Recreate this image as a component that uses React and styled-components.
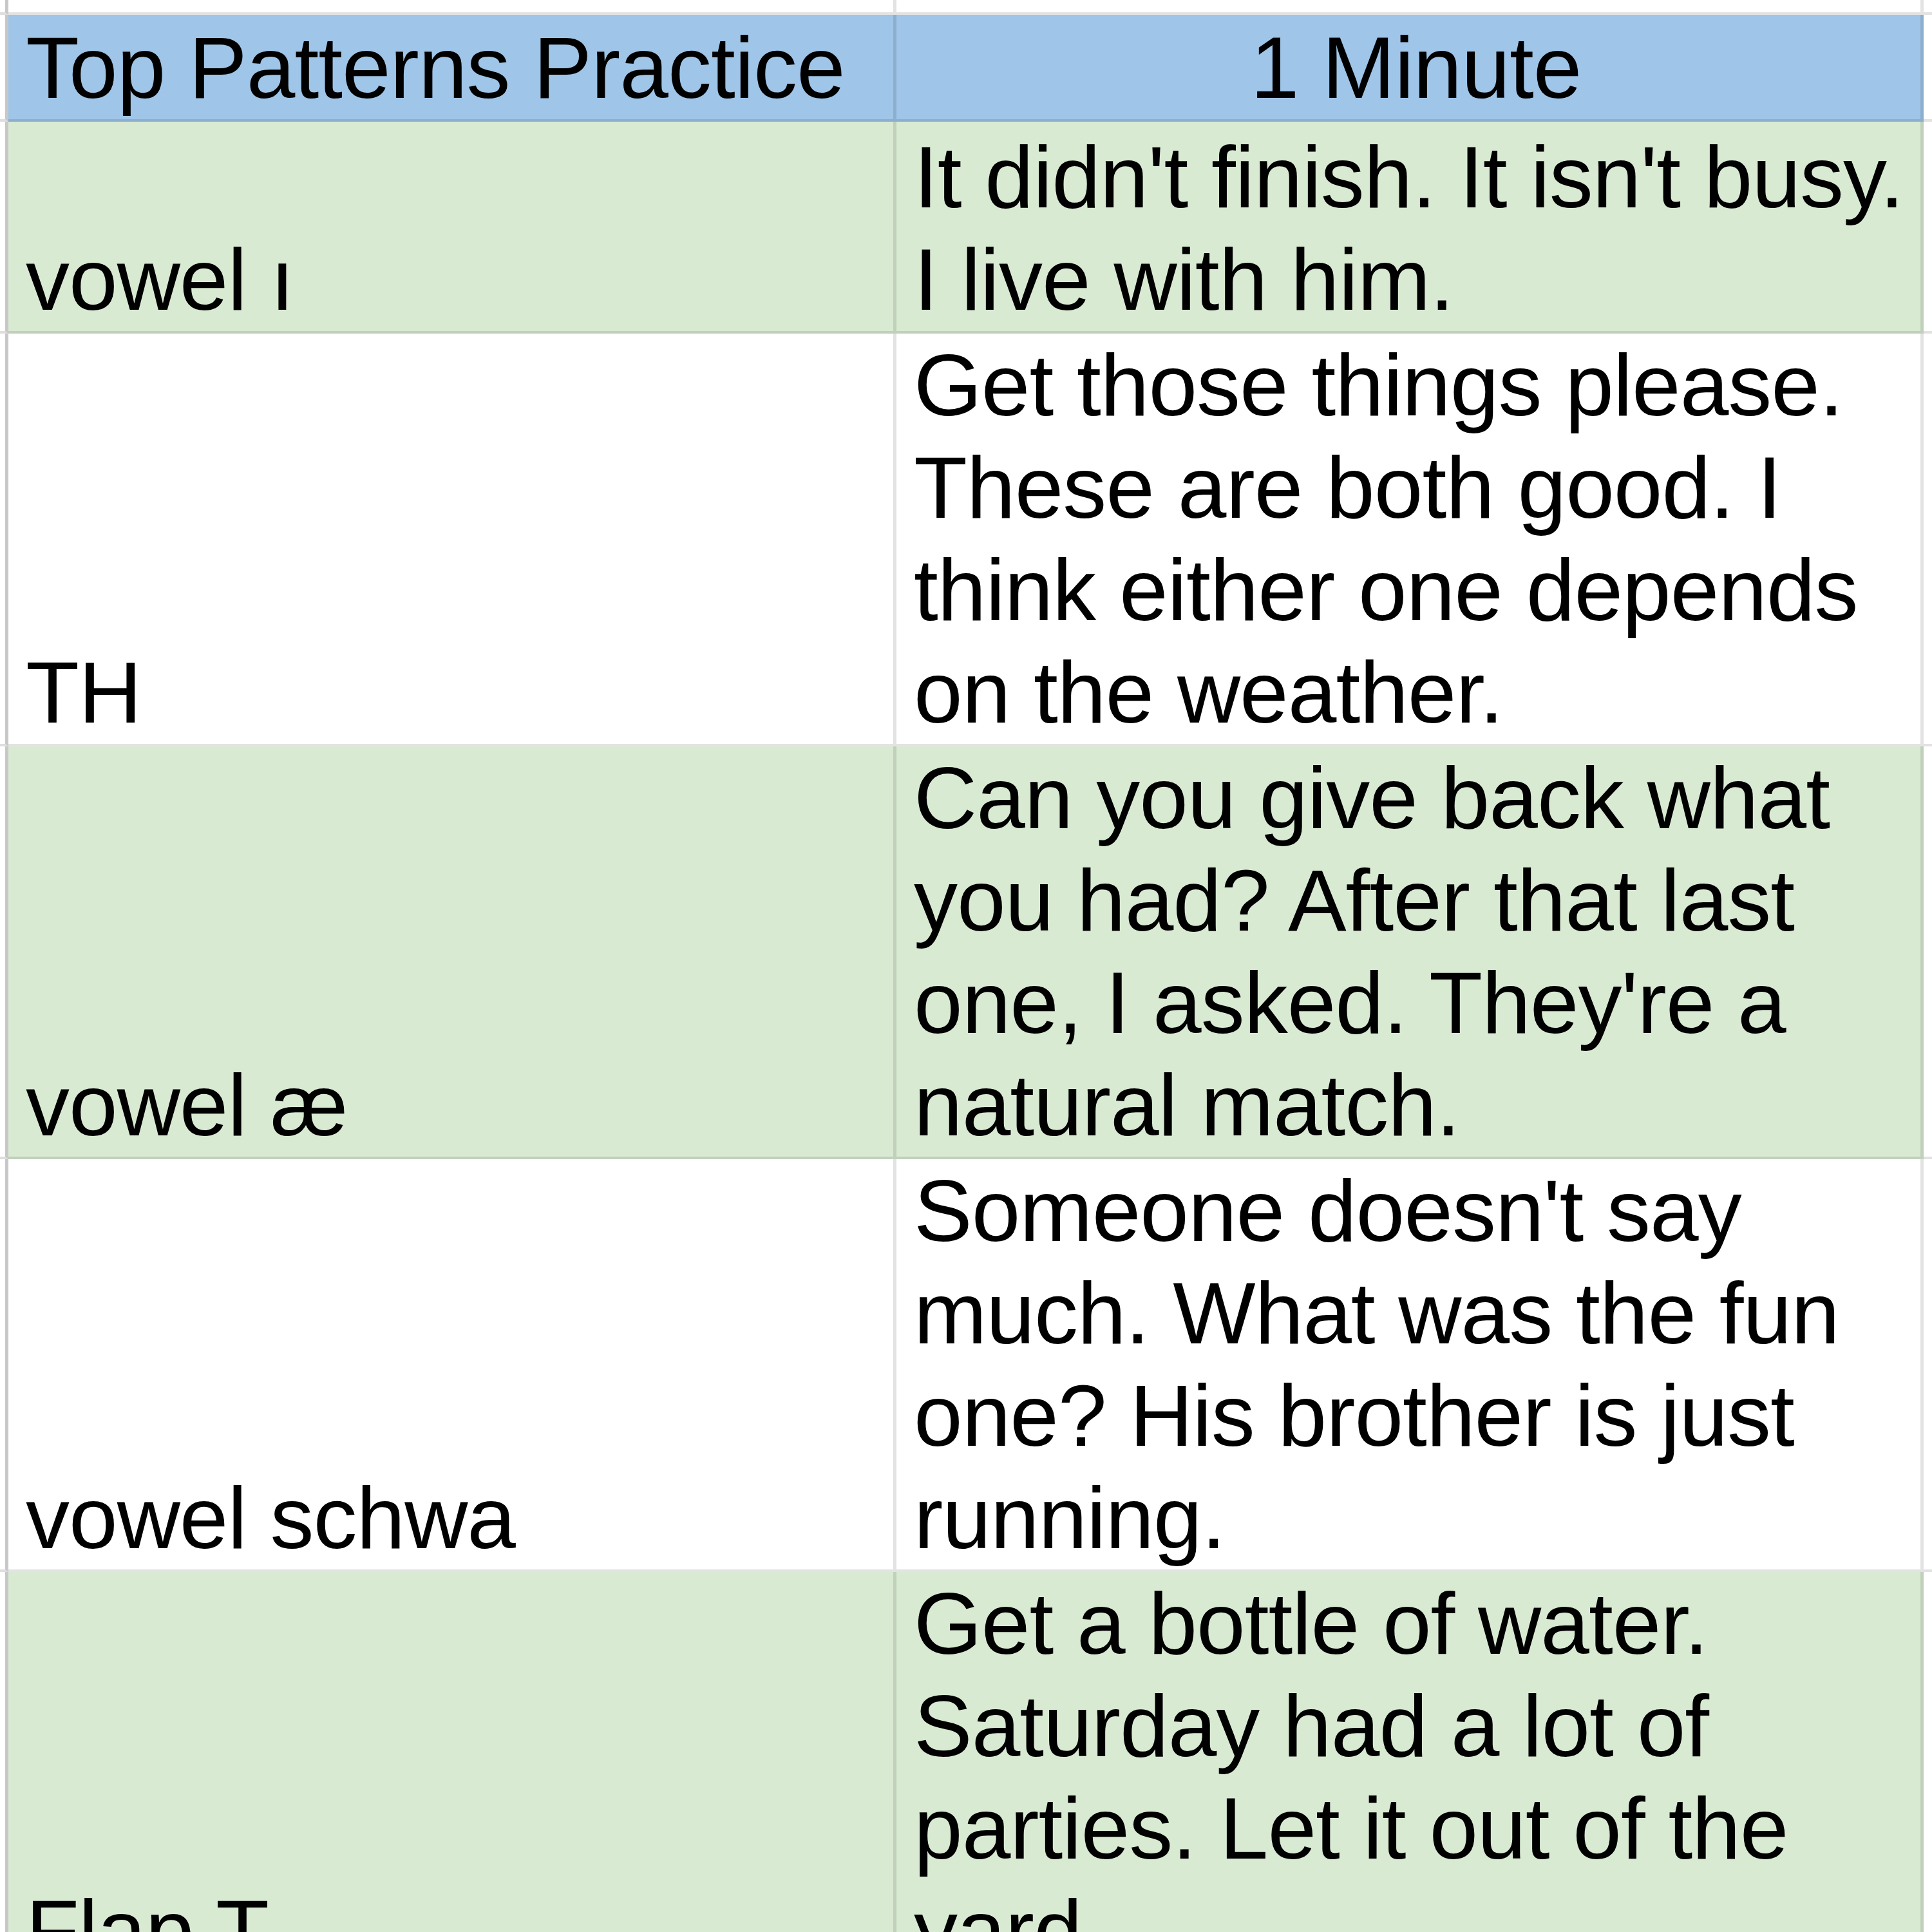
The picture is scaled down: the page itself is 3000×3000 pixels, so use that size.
import React from 'react'
import styled, { createGlobalStyle } from 'styled-components'

const GlobalStyle = createGlobalStyle`
    html, body {
        margin: 0;
        padding: 0;
        background: #ffffff;
    }
    body {
        font-family: "Liberation Sans", Arial, sans-serif;
        color: #000000;
        overflow: hidden;
    }
`;

const fills = {
    blue: '#9fc5e8',
    green: '#d9ead3',
    white: '#ffffff',
};

const Sheet = styled.div`
    width: 3000px;
    display: flex;
    flex-direction: column;
`;

const Row = styled.div`
    display: grid;
    grid-template-columns: 13px 1379px 1595px 1fr;
    height: ${props => props.h}px;
`;

const Gutter = styled.div`
    box-sizing: border-box;
    background: #ffffff;
    border-right: 5px solid #c8c8c8;
    border-bottom: 4px solid #dedede;
`;

const Cell = styled.div`
    box-sizing: border-box;
    background: ${props => fills[props.fill || 'white']};
    border-right: 5px solid rgba(0, 0, 0, 0.11);
    border-bottom: 4px solid rgba(0, 0, 0, 0.11);
    padding: 0 4px 0 27px;
    display: flex;
    flex-direction: column;
    justify-content: flex-end;
    align-items: ${props => props.center ? 'center' : 'flex-start'};
    font-size: 136px;
    line-height: 159px;
    letter-spacing: -1px;
    white-space: nowrap;
    overflow: hidden;
`;

const Rest = styled.div`
    box-sizing: border-box;
    background: #ffffff;
    border-bottom: 4px solid #e2e2e2;
`;

const Line = styled.span`
    display: block;
`;

const rows = [
    {
        fill: 'green',
        label: 'vowel ı',
        lines: ["It didn't finish. It isn't busy.", 'I live with him.'],
        h: 329,
    },
    {
        fill: 'white',
        label: 'TH',
        lines: ['Get those things please.', 'These are both good. I', 'think either one depends', 'on the weather.'],
        h: 641,
    },
    {
        fill: 'green',
        label: 'vowel æ',
        lines: ['Can you give back what', 'you had? After that last', "one, I asked. They're a", 'natural match.'],
        h: 641,
    },
    {
        fill: 'white',
        label: 'vowel schwa',
        lines: ["Someone doesn't say", 'much. What was the fun', 'one? His brother is just', 'running.'],
        h: 641,
    },
    {
        fill: 'green',
        label: 'Flap T',
        lines: ['Get a bottle of water.', 'Saturday had a lot of', 'parties. Let it out of the', 'yard.'],
        h: 641,
    },
];

export default function App() {
    return (
        <>
            <GlobalStyle />
            <Sheet>
                <Row h={23}>
                    <Gutter />
                    <Cell />
                    <Cell />
                    <Rest />
                </Row>
                <Row h={166}>
                    <Gutter />
                    <Cell fill="blue">Top Patterns Practice</Cell>
                    <Cell fill="blue" center>1 Minute</Cell>
                    <Rest />
                </Row>
                {rows.map((row) => (
                    <Row h={row.h} key={row.label}>
                        <Gutter />
                        <Cell fill={row.fill}>
                            <Line>{row.label}</Line>
                        </Cell>
                        <Cell fill={row.fill}>
                            {row.lines.map((text) => (
                                <Line key={text}>{text}</Line>
                            ))}
                        </Cell>
                        <Rest />
                    </Row>
                ))}
            </Sheet>
        </>
    )
}
